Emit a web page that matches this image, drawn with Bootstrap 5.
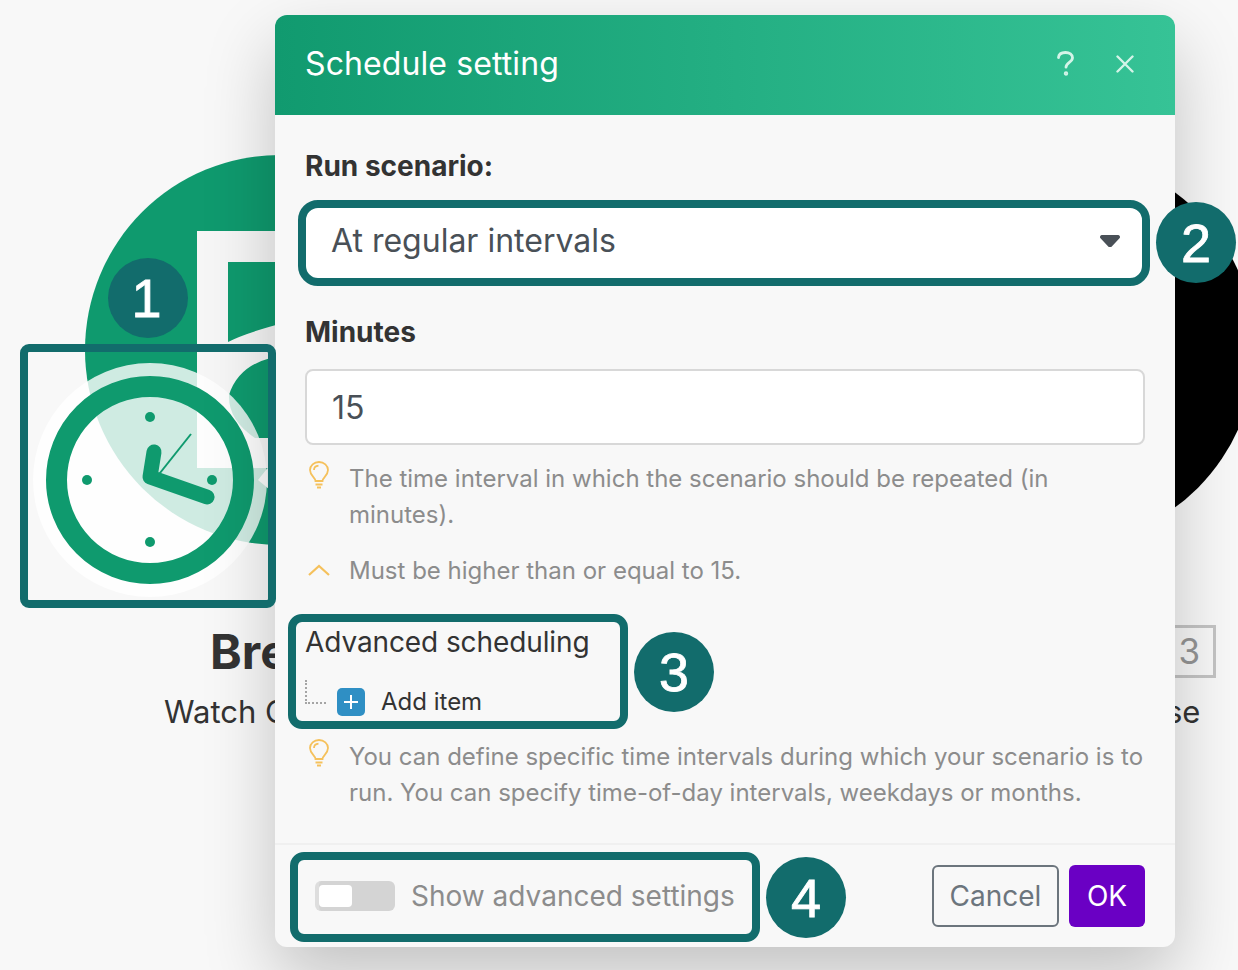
<!DOCTYPE html>
<html lang="en">
<head>
  <meta charset="UTF-8">
  <title>Schedule setting</title>
  <link rel="stylesheet" href="https://cdn.jsdelivr.net/npm/bootstrap@5.3.0/dist/css/bootstrap.min.css">
  <style>
    body { background: #f8f8f8; font-family: Inter, "Liberation Sans", sans-serif; color: #333; height: 970px; overflow: hidden; }
    .stage { width: 1238px; height: 970px; padding: 15px 63px 0 275px; overflow: hidden; }
    .backdrop { top: 0; left: 0; }
    .bg-title { top: 622px; left: 210px; font-size: 48px; font-weight: 700; line-height: 60px; }
    .bg-sub { top: 693px; left: 164px; font-size: 31px; line-height: 38px; }
    .bg-sub-end { top: 693px; left: 1166px; font-size: 31px; line-height: 38px; }
    .bg-count { top: 625px; left: 1160px; width: 56px; height: 53px; border: 3px solid #c4c4c4; color: #959595; font-size: 35px; line-height: 47px; text-align: right; padding-right: 13px; }

    .sched-modal { width: 900px; height: 932px; background: #f8f8f8; border-radius: 12px; box-shadow: 0 30px 70px rgba(0,0,0,.22); z-index: 2; }
    .sched-head { height: 100px; padding: 0 41px 3px 30px; background: linear-gradient(90deg, #119a6f, #36c396); border-radius: 12px 12px 0 0; color: #fff; font-size: 32px; letter-spacing: .1px; }
    .head-icons { column-gap: 42px; }
    .sched-body { padding: 32px 30px 0; height: 728px; }
    .field-label { font-size: 28px; font-weight: 700; line-height: 38px; margin-bottom: 23px; }
    .label-minutes { margin-top: 35px; margin-bottom: 18px; }
    .field-select.form-select { height: 70px; padding: 0 26px 4px; font-size: 32px; color: #495057; border: 0; border-radius: 12px; background-color: #fff; background-size: 20px 12px; background-position: right 25px top 27px; background-image: url("data:image/svg+xml,%3Csvg xmlns='http://www.w3.org/2000/svg' viewBox='0 0 20 12'%3E%3Cpath d='M2 0h16a2 2 0 0 1 1.500 3.300l-7.500 8a2.800 2.800 0 0 1-4 0L.5 3.300A2 2 0 0 1 2 0z' fill='%23495057'/%3E%3C/svg%3E"); }
    .field-input.form-control { height: 76px; padding: 0 25px; font-size: 32px; color: #495057; border: 2px solid #d8d8d8; border-radius: 8px; background: #fff; }
    .hint-row { color: #8c8c8c; font-size: 24px; line-height: 36px; column-gap: 20px; }
    .hint-first { margin-top: 16px; }
    .hint-limit { margin-top: 20px; }
    .hint-adv { margin-top: 15px; }
    .hint-icon { width: 20px; flex: none; margin-left: 4px; overflow: visible; }
    .sched-foot { height: 104px; padding: 0 30px 0 40px; border-top: 2px solid #f0f0f0; }
    .adv-title { font-size: 28px; line-height: 38px; letter-spacing: -.1px; margin-top: 34px; }
    .add-row { font-size: 24px; line-height: 30px; margin-top: 19px; }
    .add-btn { width: 28px; height: 28px; background: #2f8fc4; border-radius: 5px; }
    .tree-line { width: 21px; height: 24px; border-left: 2px dotted #a5a5a5; border-bottom: 2px dotted #a5a5a5; margin-right: 11px; margin-bottom: 20px; }
    .toggle-track { width: 80px; height: 30px; background: #d4d4d4; border-radius: 6px; border-left: 4px solid #dedede; padding: 4px 0; }
    .toggle-knob { width: 33px; height: 22px; background: #fff; border-radius: 4px; }
    .toggle-label { color: #8c8c8c; font-size: 28px; margin-left: 16px; }
    .foot-btn.btn { height: 62px; font-size: 28px; line-height: 1; padding: 0; border-radius: 6px; }
    .btn-cancel.btn { border: 2px solid #6c757d; color: #6c757d; background: transparent; width: 127px; }
    .btn-ok.btn { border: 0; color: #fff; background: #6a00c4; width: 76px; margin-left: 10px; }

    .callout-box { border: 8px solid #126c6c; border-radius: 14px; z-index: 3; pointer-events: none; }
    .box-one { left: 20px; top: 344px; width: 256px; height: 264px; border-radius: 9px; }
    .box-two { left: 298px; top: 200px; width: 852px; height: 86px; border-radius: 20px; }
    .box-three { left: 288px; top: 614px; width: 340px; height: 115px; }
    .box-four { left: 290px; top: 852px; width: 470px; height: 90px; }
    .callout-num { width: 80px; height: 80px; border-radius: 50%; background: #126c6c; color: #fff; font-family: "Liberation Sans", sans-serif; font-size: 54px; line-height: 1; -webkit-text-stroke: .8px #fff; z-index: 4; }
    .num-one { left: 108px; top: 258px; padding-right: 3px; }
    .num-two { left: 1156px; top: 202px; height: 81px; }
    .num-three { left: 634px; top: 632px; }
    .num-four { left: 766px; top: 857px; height: 81px; }
  </style>
</head>
<body>
  <div class="stage position-relative">
    <!-- page behind the dialog -->
    <svg class="backdrop position-absolute" width="1238" height="970" viewBox="0 0 1238 970">
      <circle cx="280" cy="350" r="195" fill="#0f9a6e"/>
      <circle cx="1060" cy="350" r="195" fill="#000"/>
      <path d="M197 231H287V262H228V342Q245 333 287 322V355Q240 360 229 395Q228 420 255 438H287V468H197Z" fill="#f6f6f6"/>
      <path d="M270 465L258 480L270 490Z" fill="#f6f6f6"/>
      <circle cx="150" cy="480" r="117" fill="#fff" fill-opacity=".8"/>
      <circle cx="150" cy="480" r="93.500" fill="none" stroke="#0f9a6e" stroke-width="21"/>
      <circle cx="150" cy="417" r="5" fill="#0f9a6e"/>
      <circle cx="87" cy="480" r="5" fill="#0f9a6e"/>
      <circle cx="212" cy="480" r="5" fill="#0f9a6e"/>
      <circle cx="150" cy="542" r="5" fill="#0f9a6e"/>
      <path d="M154 452l-4 25 57 20" fill="none" stroke="#0f9a6e" stroke-width="15" stroke-linecap="round" stroke-linejoin="round"/>
      <path d="M156 478l35-44" stroke="#0f9a6e" stroke-width="2"/>
    </svg>
    <div class="bg-title position-absolute">Bre</div>
    <div class="bg-sub position-absolute">Watch C</div>
    <div class="bg-count position-absolute">3</div>
    <div class="bg-sub-end position-absolute">se</div>

    <!-- dialog -->
    <div class="sched-modal position-relative d-flex flex-column">
      <div class="sched-head d-flex align-items-center justify-content-between">
        <span>Schedule setting</span>
        <div class="head-icons d-flex align-items-center">
          <svg width="17" height="25" viewBox="0 0 17 25" fill="none" stroke="#d4f4e8" stroke-width="2.800" stroke-linecap="round"><path d="M1.500 6.500C1.800 3.200 4.500 1.500 8.500 1.500s7 2 7 5.300c0 4.600-6.500 4.600-6.500 9.400"/><circle cx="9" cy="22.500" r=".8" fill="#d4f4e8"/></svg>
          <svg width="18" height="18" viewBox="0 0 18 18" stroke="#d4f4e8" stroke-width="2.400" stroke-linecap="round"><path d="M1.500 1.500l15 15M16.500 1.500l-15 15"/></svg>
        </div>
      </div>
      <div class="sched-body">
        <div class="field-label">Run scenario:</div>
        <select class="field-select form-select"><option>At regular intervals</option></select>
        <div class="field-label label-minutes">Minutes</div>
        <input class="field-input form-control" value="15">
        <div class="hint-row hint-first d-flex">
          <svg class="hint-icon" width="20" height="28" viewBox="0 0 20 28" fill="none" stroke="#f5c15c" stroke-width="1.800"><path d="M6.500 20c0-3.500-5.500-5.500-5.500-11C1 4.500 5 1 10 1s9 3.500 9 8c0 5.500-5.500 7.500-5.500 11z"/><path d="M6.500 23.500h7M8 26.500h4"/><path d="M5 9c0-2.500 2-4 4.500-4.300"/></svg>
          <div>The time interval in which the scenario should be repeated (in minutes).</div>
        </div>
        <div class="hint-row hint-limit d-flex align-items-center">
          <svg class="hint-icon" width="20" height="14" viewBox="0 0 20 14" fill="none" stroke="#f5c15c" stroke-width="2.200"><path d="M0 11L10 2l10 9"/></svg>
          <div>Must be higher than or equal to 15.</div>
        </div>
        <div class="adv-title">Advanced scheduling</div>
        <div class="add-row d-flex align-items-center">
          <div class="tree-line"></div>
          <div class="add-btn d-flex align-items-center justify-content-center me-3">
            <svg width="16" height="16" viewBox="0 0 16 16" stroke="#fff" stroke-width="2"><path d="M8 1v14M1 8h14"/></svg>
          </div>
          <span>Add item</span>
        </div>
        <div class="hint-row hint-adv d-flex">
          <svg class="hint-icon" width="20" height="28" viewBox="0 0 20 28" fill="none" stroke="#f5c15c" stroke-width="1.800"><path d="M6.500 20c0-3.500-5.500-5.500-5.500-11C1 4.500 5 1 10 1s9 3.500 9 8c0 5.500-5.500 7.500-5.500 11z"/><path d="M6.500 23.500h7M8 26.500h4"/><path d="M5 9c0-2.500 2-4 4.500-4.300"/></svg>
          <div>You can define specific time intervals during which your scenario is to run. You can specify time-of-day intervals, weekdays or months.</div>
        </div>
      </div>
      <div class="sched-foot d-flex align-items-center">
        <div class="toggle-track"><div class="toggle-knob"></div></div>
        <span class="toggle-label">Show advanced settings</span>
        <button class="foot-btn btn btn-cancel ms-auto">Cancel</button>
        <button class="foot-btn btn btn-ok">OK</button>
      </div>
    </div>

    <!-- callouts drawn over the screenshot -->
    <div class="callout-box box-one position-absolute"></div>
    <div class="callout-box box-two position-absolute"></div>
    <div class="callout-box box-three position-absolute"></div>
    <div class="callout-box box-four position-absolute"></div>
    <div class="callout-num num-one position-absolute d-flex align-items-center justify-content-center">1</div>
    <div class="callout-num num-two position-absolute d-flex align-items-center justify-content-center">2</div>
    <div class="callout-num num-three position-absolute d-flex align-items-center justify-content-center">3</div>
    <div class="callout-num num-four position-absolute d-flex align-items-center justify-content-center">4</div>
  </div>
  <script src="https://cdn.jsdelivr.net/npm/bootstrap@5.3.0/dist/js/bootstrap.bundle.min.js"></script>
</body>
</html>
